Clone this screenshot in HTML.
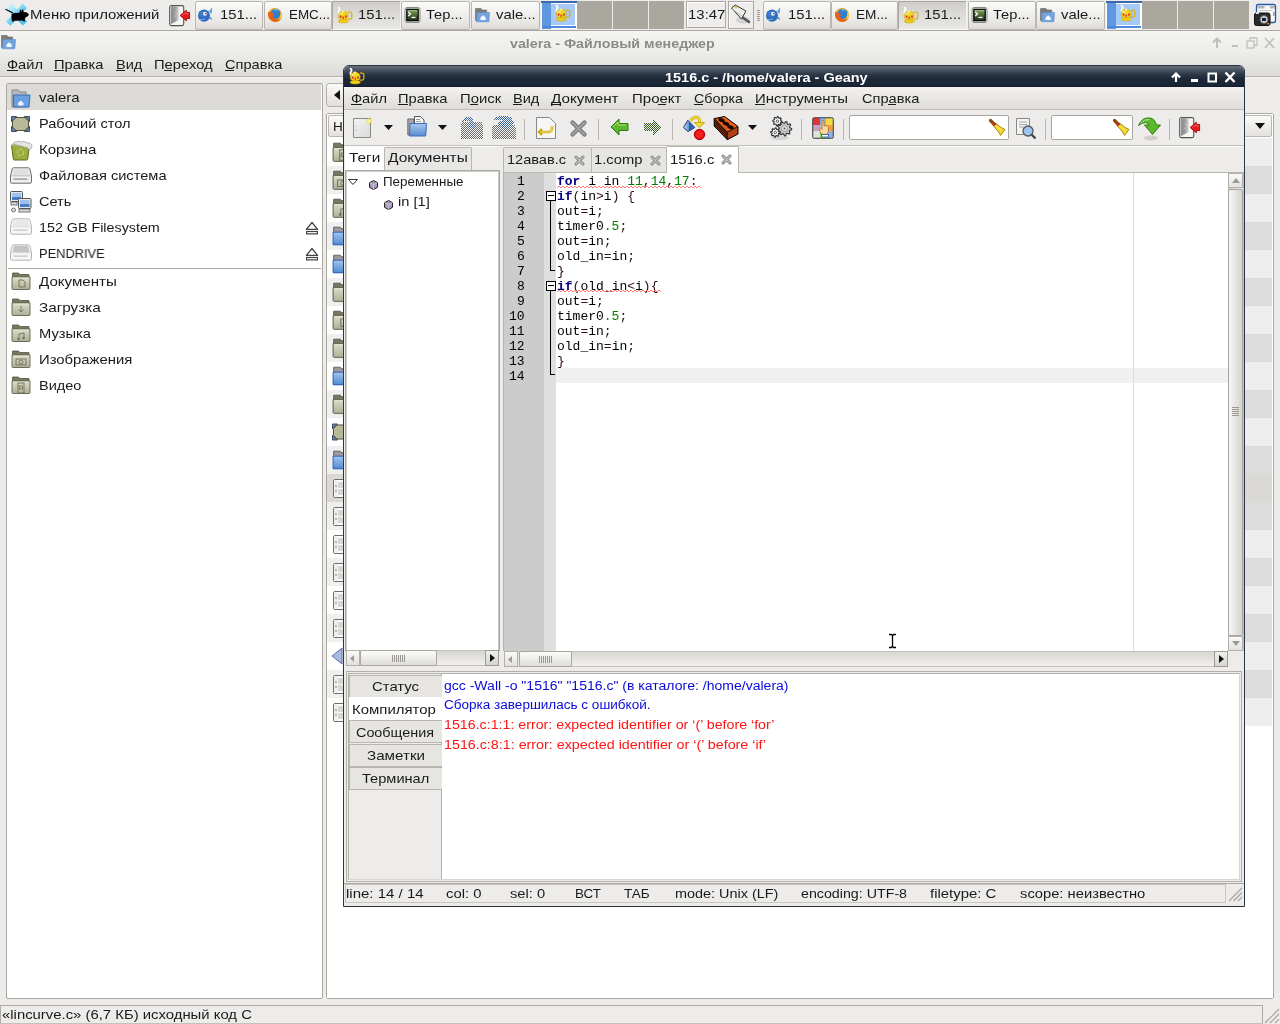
<!DOCTYPE html>
<html><head><meta charset="utf-8"><style>*{margin:0;padding:0;box-sizing:border-box}
html,body{width:1280px;height:1024px;overflow:hidden;background:#edeceb;font-family:"Liberation Sans",sans-serif;font-size:13px;color:#1a1a1a}
body{position:relative}
.a{position:absolute}
.t{position:absolute;white-space:nowrap;line-height:15px;transform-origin:0 0;will-change:transform}
.m{font-family:"Liberation Mono",monospace;font-size:13px}
svg{position:absolute;overflow:visible}
</style></head><body>
<svg width="0" height="0" style="position:absolute"><defs><linearGradient id="gd" x1="0" x2="1"><stop offset="0" stop-color="#c8c8c8"/><stop offset=".15" stop-color="#8e8e8e"/><stop offset=".55" stop-color="#9a9a9a"/><stop offset="1" stop-color="#d8d8d8"/></linearGradient><linearGradient id="gfold" x1="0" y1="0" x2="0" y2="1"><stop offset="0" stop-color="#dcddc8"/><stop offset="1" stop-color="#aeaf96"/></linearGradient><linearGradient id="gfoldb" x1="0" y1="0" x2="0" y2="1"><stop offset="0" stop-color="#a4c6f2"/><stop offset="1" stop-color="#5088d4"/></linearGradient><linearGradient id="gterm" x1="0" y1="0" x2="0" y2="1"><stop offset="0" stop-color="#b8d098"/><stop offset=".25" stop-color="#6a8a4a"/><stop offset="1" stop-color="#1e2a14"/></linearGradient><linearGradient id="gx" x1="0" y1="0" x2="1" y2="1"><stop offset="0" stop-color="#f0fbfe"/><stop offset=".35" stop-color="#9ee0f6"/><stop offset=".6" stop-color="#5ac8f0"/><stop offset="1" stop-color="#4cbcec"/></linearGradient></defs></svg>
<div class="a" style="left:0px;top:0px;width:1280px;height:30px;background:#edeceb"></div>
<div class="a" style="left:0px;top:30px;width:1280px;height:1px;background:#aaa8a1"></div>
<svg style="left:2px;top:1px" width="30" height="28" viewBox="0 0 30 28"><path d="M9.4 2.2 L3.3 7.9 L20.8 24.6 L25.2 20.4 Z" fill="url(#gx)"/><path d="M20.5 2.7 L24.9 7.1 L8.5 24.7 L4 20.4 Z" fill="url(#gx)"/>
<path d="M3.5 8.3 L11 12" stroke="#000" stroke-width="1.2"/>
<path d="M9.6 13 Q12 11.6 17.6 11.8 L17.8 9 Q18.4 7.8 19.1 9.2 L19.5 10.8 L20.2 8.4 Q21 7.6 21.4 9.4 L21.6 11 Q25.2 10.8 26.9 13.2 Q26.6 15.9 23.6 16.6 L22.7 18.8 L23.2 20.6 L21.1 20.2 L20.5 19.4 L12.3 19.8 L11.1 20.9 L9.8 20.1 Q9.1 16.2 9.6 13 Z" fill="#000"/></svg>
<div class="t" style="left:30px;top:7px;font-size:13px;transform:scaleX(1.1476);">Меню приложений</div>
<svg style="left:164px;top:1px" width="30" height="28" viewBox="0 0 30 28"><rect x="5.7" y="4.6" width="14" height="20" rx="1.6" fill="#f6f6f4" stroke="#55554f" stroke-width="1.1"/>
<path d="M6.3 5.2 H14.8 V19 L6.3 23.6 Z" fill="url(#gd)"/>
<path d="M11 11 l2.5 2.5 M12 14.5 l-1.6 1.6" stroke="#d4d4d4" stroke-width=".8"/>
<path d="M16.1 14.5 L22.3 9.2 V11.4 H25.6 V17.6 H22.3 V19.8 Z" fill="#e41c1c" stroke="#a80000" stroke-width=".9"/>
<path d="M18 14.5 L22 11.5 V13 H25" stroke="#f88" stroke-width=".6" fill="none"/></svg>
<div class="a" style="left:195px;top:1px;width:68px;height:29px;background:linear-gradient(#fbfbfb,#e6e5e2 80%,#dcdad6);border:1px solid #bab7b0;border-radius:2px"></div>
<svg style="left:198px;top:7px" width="16" height="16" viewBox="0 0 16 16"><path d="M10.5 4.5 l3.5-4 q.6 3-.5 6.5 z" fill="#6aa6e6"/><path d="M10.5 11 l3.8 2 q-1.5-2.5-1.6-3z" fill="#3f7cc8"/>
<ellipse cx="6" cy="8.6" rx="6" ry="6.2" fill="#2f6cc0"/><ellipse cx="5" cy="7" rx="3.5" ry="3" fill="#4a86d4" opacity=".6"/>
<circle cx="7" cy="6.8" r="2" fill="#f2f2f2"/><circle cx="7.6" cy="6.6" r=".8" fill="#445"/><path d="M1.5 12.5 q3 .5 5.5-.8" stroke="#7ab0ec" stroke-width="1" fill="none"/></svg>
<div class="t" style="left:220px;top:7px;font-size:13px;transform:scaleX(1.1427);">151...</div>
<div class="a" style="left:264px;top:1px;width:68px;height:29px;background:linear-gradient(#fbfbfb,#e6e5e2 80%,#dcdad6);border:1px solid #bab7b0;border-radius:2px"></div>
<svg style="left:267px;top:7px" width="16" height="16" viewBox="0 0 16 16"><circle cx="8" cy="8" r="7" fill="#f0a020"/><circle cx="8.6" cy="7" r="5" fill="#2f7fd0"/><path d="M6 2.5 q4-1.5 6.5 1.5 q-2-1-4 0z" fill="#50b8e8"/>
<path d="M1.2 4.5 q-1 7 4 9.5 q5 2.5 9.3-2 q-1.5 1-4.5.5 q-4-1-4.5-4 l2 .3 q-.5-1.5-2-2 l1.5-1.5 q-1.5 0-2.5 1z" fill="#e8601a"/>
<path d="M13.5 5 q2 3 .5 6.5 l-1.5-1 q1-2.5 1-5.5z" fill="#f8d030"/></svg>
<div class="t" style="left:289px;top:7px;font-size:13px;transform:scaleX(1.0295);">EMC...</div>
<div class="a" style="left:332px;top:1px;width:69px;height:29px;background:linear-gradient(#cfcecb,#e9e8e6);border:1px solid #a9a69f;border-right-color:#f4f4f2;border-bottom-color:#fafaf9"></div>
<svg style="left:336px;top:7px" width="16" height="16" viewBox="0 0 16 16"><path d="M2.6 .8 q1.8 1.4 .4 3 q-1.2 1.4 .2 3.6" stroke="#fff" stroke-width="1.8" fill="none" stroke-linecap="round"/>
<path d="M12 5.2 h2.2 q1.6 0 1.6 1.6 v3.6 q0 1.8-1.8 1.8 h-2.2" stroke="#d8b40c" stroke-width="1.3" fill="none"/>
<path d="M2.2 9.2 q0-4.8 5-5 q5 .2 5 5 q0 3.6-5 4 q-5-.4-5-4z" fill="#f0d418" stroke="#c8a20a" stroke-width=".6"/>
<ellipse cx="7" cy="4.6" rx="1.5" ry="1" fill="#faf0a0"/><ellipse cx="5" cy="7" rx="1.8" ry="1.3" fill="#faf0a0" opacity=".7"/>
<ellipse cx="7.3" cy="14.2" rx="5.2" ry="1.8" fill="#f0cc18" stroke="#c8a20a" stroke-width=".5"/>
<ellipse cx="4.6" cy="9.6" rx=".9" ry="1.4" fill="#e03828"/><ellipse cx="10" cy="9.6" rx=".9" ry="1.4" fill="#e03828"/><path d="M7.2 9 l1.1 1.8 l-1.1 1.8 l-1.1-1.8z" fill="#e84050"/></svg>
<div class="t" style="left:358px;top:7px;font-size:13px;transform:scaleX(1.1427);">151...</div>
<div class="a" style="left:401px;top:1px;width:69px;height:29px;background:linear-gradient(#fbfbfb,#e6e5e2 80%,#dcdad6);border:1px solid #bab7b0;border-radius:2px"></div>
<svg style="left:404px;top:7px" width="16" height="16" viewBox="0 0 16 16"><rect x="1" y=".5" width="15" height="15" rx="2" fill="#e8e8e6" stroke="#8a8a86" stroke-width="1"/>
<rect x="2.8" y="2.3" width="11.4" height="11.4" fill="url(#gterm)" stroke="#000" stroke-width="1.2"/>
<path d="M4.3 5 l2.2 2 l-2.2 2" stroke="#fff" fill="none" stroke-width="1.2"/><rect x="7.5" y="9.8" width="4" height="1.3" fill="#fff"/></svg>
<div class="t" style="left:426px;top:7px;font-size:13px;transform:scaleX(1.1250);">Тер...</div>
<div class="a" style="left:471px;top:1px;width:69px;height:29px;background:linear-gradient(#fbfbfb,#e6e5e2 80%,#dcdad6);border:1px solid #bab7b0;border-radius:2px"></div>
<svg style="left:474px;top:8px" width="16" height="14" viewBox="0 0 16 14"><path d="M1.5 .5 h5.5 l1.2 1.5 h4.5 v10.5 h-11.2z" fill="#7a7a78" stroke="#6a6a68" stroke-width=".6"/>
<path d="M3 4.5 h12.5 l-.6 8.8 q0 .5-.5.5 h-11.9z" fill="#74a4dc" stroke="#5a8cd0" stroke-width=".6"/>
<path d="M6.5 12 v-2.6 l2.6-2.2 l2.6 2.2 v2.6z" fill="#f4f8ff"/></svg>
<div class="t" style="left:496px;top:7px;font-size:13px;transform:scaleX(1.1428);">vale...</div>
<div class="a" style="left:541px;top:1px;width:36px;height:28px;background:#fff"></div>
<div class="a" style="left:541px;top:1px;width:36px;height:2px;background:#3a68b0"></div>
<div class="a" style="left:542px;top:3px;width:9px;height:26px;background:#6098e0"></div>
<div class="a" style="left:542px;top:26px;width:34px;height:2px;background:#4a88e0"></div>
<div class="a" style="left:551px;top:4px;width:24px;height:21px;background:#a6c9f8"></div>
<svg style="left:554px;top:5px" width="16" height="16" viewBox="0 0 16 16"><path d="M2.6 .8 q1.8 1.4 .4 3 q-1.2 1.4 .2 3.6" stroke="#fff" stroke-width="1.8" fill="none" stroke-linecap="round"/>
<path d="M12 5.2 h2.2 q1.6 0 1.6 1.6 v3.6 q0 1.8-1.8 1.8 h-2.2" stroke="#d8b40c" stroke-width="1.3" fill="none"/>
<path d="M2.2 9.2 q0-4.8 5-5 q5 .2 5 5 q0 3.6-5 4 q-5-.4-5-4z" fill="#f0d418" stroke="#c8a20a" stroke-width=".6"/>
<ellipse cx="7" cy="4.6" rx="1.5" ry="1" fill="#faf0a0"/><ellipse cx="5" cy="7" rx="1.8" ry="1.3" fill="#faf0a0" opacity=".7"/>
<ellipse cx="7.3" cy="14.2" rx="5.2" ry="1.8" fill="#f0cc18" stroke="#c8a20a" stroke-width=".5"/>
<ellipse cx="4.6" cy="9.6" rx=".9" ry="1.4" fill="#e03828"/><ellipse cx="10" cy="9.6" rx=".9" ry="1.4" fill="#e03828"/><path d="M7.2 9 l1.1 1.8 l-1.1 1.8 l-1.1-1.8z" fill="#e84050"/></svg>
<div class="a" style="left:577px;top:1px;width:35px;height:28px;background:#a9a79e"></div>
<div class="a" style="left:613px;top:1px;width:35px;height:28px;background:#a9a79e"></div>
<div class="a" style="left:649px;top:1px;width:35px;height:28px;background:#a9a79e"></div>
<div class="a" style="left:686px;top:1px;width:40px;height:27px;background:#eeedeb;border:1px solid #a9a79f;box-shadow:inset 1px 1px 0 #fff"></div>
<div class="t" style="left:688px;top:7px;font-size:13px;transform:scaleX(1.1503);">13:47</div>
<div class="a" style="left:728px;top:1px;width:26px;height:28px;background:#eeedeb;border:1px solid #a9a79f;box-shadow:inset 1px 1px 0 #fff"></div>
<svg style="left:728px;top:1px" width="26" height="28" viewBox="0 0 26 28"><ellipse cx="15" cy="19" rx="7" ry="3.5" fill="#000" opacity=".12"/>
<path d="M14 16 L21 21" stroke="#555" stroke-width="2.6" stroke-linecap="round"/>
<path d="M3.5 7 L7.2 4 L17.9 10 L13.5 18 Z" fill="#f0f0f0" stroke="#333" stroke-width="1"/>
<path d="M4 8 L14 15" stroke="#bbb" stroke-width="1"/>
<path d="M6.5 5.5 L9 7" stroke="#f0c040" stroke-width="2"/></svg>
<div class="a" style="left:757px;top:10px;width:3px;height:1px;background:#9c9a94"></div>
<div class="a" style="left:757px;top:12px;width:3px;height:1px;background:#9c9a94"></div>
<div class="a" style="left:757px;top:14px;width:3px;height:1px;background:#9c9a94"></div>
<div class="a" style="left:757px;top:16px;width:3px;height:1px;background:#9c9a94"></div>
<div class="a" style="left:757px;top:18px;width:3px;height:1px;background:#9c9a94"></div>
<div class="a" style="left:757px;top:20px;width:3px;height:1px;background:#9c9a94"></div>
<div class="a" style="left:763px;top:1px;width:68px;height:29px;background:linear-gradient(#fbfbfb,#e6e5e2 80%,#dcdad6);border:1px solid #bab7b0;border-radius:2px"></div>
<svg style="left:766px;top:7px" width="16" height="16" viewBox="0 0 16 16"><path d="M10.5 4.5 l3.5-4 q.6 3-.5 6.5 z" fill="#6aa6e6"/><path d="M10.5 11 l3.8 2 q-1.5-2.5-1.6-3z" fill="#3f7cc8"/>
<ellipse cx="6" cy="8.6" rx="6" ry="6.2" fill="#2f6cc0"/><ellipse cx="5" cy="7" rx="3.5" ry="3" fill="#4a86d4" opacity=".6"/>
<circle cx="7" cy="6.8" r="2" fill="#f2f2f2"/><circle cx="7.6" cy="6.6" r=".8" fill="#445"/><path d="M1.5 12.5 q3 .5 5.5-.8" stroke="#7ab0ec" stroke-width="1" fill="none"/></svg>
<div class="t" style="left:788px;top:7px;font-size:13px;transform:scaleX(1.1427);">151...</div>
<div class="a" style="left:831px;top:1px;width:67px;height:29px;background:linear-gradient(#fbfbfb,#e6e5e2 80%,#dcdad6);border:1px solid #bab7b0;border-radius:2px"></div>
<svg style="left:834px;top:7px" width="16" height="16" viewBox="0 0 16 16"><circle cx="8" cy="8" r="7" fill="#f0a020"/><circle cx="8.6" cy="7" r="5" fill="#2f7fd0"/><path d="M6 2.5 q4-1.5 6.5 1.5 q-2-1-4 0z" fill="#50b8e8"/>
<path d="M1.2 4.5 q-1 7 4 9.5 q5 2.5 9.3-2 q-1.5 1-4.5.5 q-4-1-4.5-4 l2 .3 q-.5-1.5-2-2 l1.5-1.5 q-1.5 0-2.5 1z" fill="#e8601a"/>
<path d="M13.5 5 q2 3 .5 6.5 l-1.5-1 q1-2.5 1-5.5z" fill="#f8d030"/></svg>
<div class="t" style="left:856px;top:7px;font-size:13px;transform:scaleX(1.0489);">EM...</div>
<div class="a" style="left:898px;top:1px;width:69px;height:29px;background:linear-gradient(#cfcecb,#e9e8e6);border:1px solid #a9a69f;border-right-color:#f4f4f2;border-bottom-color:#fafaf9"></div>
<svg style="left:902px;top:7px" width="16" height="16" viewBox="0 0 16 16"><path d="M2.6 .8 q1.8 1.4 .4 3 q-1.2 1.4 .2 3.6" stroke="#fff" stroke-width="1.8" fill="none" stroke-linecap="round"/>
<path d="M12 5.2 h2.2 q1.6 0 1.6 1.6 v3.6 q0 1.8-1.8 1.8 h-2.2" stroke="#d8b40c" stroke-width="1.3" fill="none"/>
<path d="M2.2 9.2 q0-4.8 5-5 q5 .2 5 5 q0 3.6-5 4 q-5-.4-5-4z" fill="#f0d418" stroke="#c8a20a" stroke-width=".6"/>
<ellipse cx="7" cy="4.6" rx="1.5" ry="1" fill="#faf0a0"/><ellipse cx="5" cy="7" rx="1.8" ry="1.3" fill="#faf0a0" opacity=".7"/>
<ellipse cx="7.3" cy="14.2" rx="5.2" ry="1.8" fill="#f0cc18" stroke="#c8a20a" stroke-width=".5"/>
<ellipse cx="4.6" cy="9.6" rx=".9" ry="1.4" fill="#e03828"/><ellipse cx="10" cy="9.6" rx=".9" ry="1.4" fill="#e03828"/><path d="M7.2 9 l1.1 1.8 l-1.1 1.8 l-1.1-1.8z" fill="#e84050"/></svg>
<div class="t" style="left:924px;top:7px;font-size:13px;transform:scaleX(1.1427);">151...</div>
<div class="a" style="left:968px;top:1px;width:68px;height:29px;background:linear-gradient(#fbfbfb,#e6e5e2 80%,#dcdad6);border:1px solid #bab7b0;border-radius:2px"></div>
<svg style="left:971px;top:7px" width="16" height="16" viewBox="0 0 16 16"><rect x="1" y=".5" width="15" height="15" rx="2" fill="#e8e8e6" stroke="#8a8a86" stroke-width="1"/>
<rect x="2.8" y="2.3" width="11.4" height="11.4" fill="url(#gterm)" stroke="#000" stroke-width="1.2"/>
<path d="M4.3 5 l2.2 2 l-2.2 2" stroke="#fff" fill="none" stroke-width="1.2"/><rect x="7.5" y="9.8" width="4" height="1.3" fill="#fff"/></svg>
<div class="t" style="left:993px;top:7px;font-size:13px;transform:scaleX(1.1250);">Тер...</div>
<div class="a" style="left:1036px;top:1px;width:69px;height:29px;background:linear-gradient(#fbfbfb,#e6e5e2 80%,#dcdad6);border:1px solid #bab7b0;border-radius:2px"></div>
<svg style="left:1039px;top:8px" width="16" height="14" viewBox="0 0 16 14"><path d="M1.5 .5 h5.5 l1.2 1.5 h4.5 v10.5 h-11.2z" fill="#7a7a78" stroke="#6a6a68" stroke-width=".6"/>
<path d="M3 4.5 h12.5 l-.6 8.8 q0 .5-.5.5 h-11.9z" fill="#74a4dc" stroke="#5a8cd0" stroke-width=".6"/>
<path d="M6.5 12 v-2.6 l2.6-2.2 l2.6 2.2 v2.6z" fill="#f4f8ff"/></svg>
<div class="t" style="left:1061px;top:7px;font-size:13px;transform:scaleX(1.1428);">vale...</div>
<div class="a" style="left:1106px;top:1px;width:36px;height:28px;background:#fff"></div>
<div class="a" style="left:1106px;top:1px;width:36px;height:2px;background:#3a68b0"></div>
<div class="a" style="left:1107px;top:3px;width:9px;height:26px;background:#6098e0"></div>
<div class="a" style="left:1107px;top:26px;width:34px;height:2px;background:#4a88e0"></div>
<div class="a" style="left:1116px;top:4px;width:24px;height:21px;background:#a6c9f8"></div>
<svg style="left:1119px;top:5px" width="16" height="16" viewBox="0 0 16 16"><path d="M2.6 .8 q1.8 1.4 .4 3 q-1.2 1.4 .2 3.6" stroke="#fff" stroke-width="1.8" fill="none" stroke-linecap="round"/>
<path d="M12 5.2 h2.2 q1.6 0 1.6 1.6 v3.6 q0 1.8-1.8 1.8 h-2.2" stroke="#d8b40c" stroke-width="1.3" fill="none"/>
<path d="M2.2 9.2 q0-4.8 5-5 q5 .2 5 5 q0 3.6-5 4 q-5-.4-5-4z" fill="#f0d418" stroke="#c8a20a" stroke-width=".6"/>
<ellipse cx="7" cy="4.6" rx="1.5" ry="1" fill="#faf0a0"/><ellipse cx="5" cy="7" rx="1.8" ry="1.3" fill="#faf0a0" opacity=".7"/>
<ellipse cx="7.3" cy="14.2" rx="5.2" ry="1.8" fill="#f0cc18" stroke="#c8a20a" stroke-width=".5"/>
<ellipse cx="4.6" cy="9.6" rx=".9" ry="1.4" fill="#e03828"/><ellipse cx="10" cy="9.6" rx=".9" ry="1.4" fill="#e03828"/><path d="M7.2 9 l1.1 1.8 l-1.1 1.8 l-1.1-1.8z" fill="#e84050"/></svg>
<div class="a" style="left:1142px;top:1px;width:35px;height:28px;background:#a9a79e"></div>
<div class="a" style="left:1178px;top:1px;width:35px;height:28px;background:#a9a79e"></div>
<div class="a" style="left:1214px;top:1px;width:35px;height:28px;background:#a9a79e"></div>
<svg style="left:1250px;top:0px" width="30" height="30" viewBox="0 0 30 30"><rect x="6.5" y="4.5" width="19" height="18" rx="2" fill="#fafafa" stroke="#2a58a8" stroke-width="1.3"/><rect x="7.5" y="6" width="7" height="2.5" fill="#b4b4b4"/><rect x="20" y="6" width="5" height="2.5" fill="#b4b4b4"/><rect x="8.5" y="10" width="14" height="1" fill="#ccc"/><rect x="23" y="12" width="1.4" height="4" fill="#6a9ee0"/>
<rect x="4.5" y="13" width="15.5" height="12.5" rx="2" fill="#2a2a2a" stroke="#111" stroke-width="1"/><rect x="6" y="12" width="3" height="2" fill="#ddd"/><circle cx="14" cy="19.5" r="4" fill="#cfcfcf" stroke="#555" stroke-width=".8"/><rect x="12" y="18" width="4" height="3" fill="#10204a"/><rect x="17.5" y="23" width="1.5" height="1.5" fill="#f0a020"/></svg>
<div class="a" style="left:0px;top:31px;width:1280px;height:45px;background:linear-gradient(#f4f4f3,#ededeb 45%,#dcdbd6)"></div>
<div class="a" style="left:0px;top:76px;width:1280px;height:1px;background:#b3b1aa"></div>
<div class="a" style="left:0px;top:77px;width:1280px;height:1px;background:#f4f4f3"></div>
<svg style="left:0px;top:35px" width="16" height="14" viewBox="0 0 16 14"><path d="M1.5 .5 h5.5 l1.2 1.5 h4.5 v10.5 h-11.2z" fill="#7a7a78" stroke="#6a6a68" stroke-width=".6"/>
<path d="M3 4.5 h12.5 l-.6 8.8 q0 .5-.5.5 h-11.9z" fill="#74a4dc" stroke="#5a8cd0" stroke-width=".6"/>
<path d="M6.5 12 v-2.6 l2.6-2.2 l2.6 2.2 v2.6z" fill="#f4f8ff"/></svg>
<div class="t" style="left:510px;top:37px;font-size:12px;font-weight:bold;color:#8c8b87;transform:scaleX(1.1889);">valera - Файловый менеджер</div>
<svg style="left:1210px;top:36px" width="66" height="14" viewBox="0 0 66 14"><path d="M7 12 v-9 M3 6.5 l4-4 l4 4" stroke="#c2c0ba" stroke-width="2" fill="none"/>
<rect x="22" y="9" width="6" height="2" fill="#c2c0ba"/>
<rect x="37" y="5" width="7" height="7" fill="none" stroke="#c2c0ba" stroke-width="1.3"/><path d="M40 5 v-3 h7 v7 h-3" fill="none" stroke="#c2c0ba" stroke-width="1.3"/>
<path d="M55 2 l9 10 M64 2 l-9 10" stroke="#c2c0ba" stroke-width="1.8"/></svg>
<div class="t" style="left:7px;top:57px;font-size:13px;transform:scaleX(1.1237);">Файл</div>
<div class="a" style="left:7px;top:70px;width:11px;height:1px;background:#1a1a1a"></div>
<div class="t" style="left:54px;top:57px;font-size:13px;transform:scaleX(1.1266);">Правка</div>
<div class="a" style="left:54px;top:70px;width:10px;height:1px;background:#1a1a1a"></div>
<div class="t" style="left:116px;top:57px;font-size:13px;transform:scaleX(1.1209);">Вид</div>
<div class="a" style="left:116px;top:70px;width:9px;height:1px;background:#1a1a1a"></div>
<div class="t" style="left:154px;top:57px;font-size:13px;transform:scaleX(1.1355);">Переход</div>
<div class="a" style="left:164px;top:70px;width:8px;height:1px;background:#1a1a1a"></div>
<div class="t" style="left:225px;top:57px;font-size:13px;transform:scaleX(1.1228);">Справка</div>
<div class="a" style="left:225px;top:70px;width:9px;height:1px;background:#1a1a1a"></div>
<div class="a" style="left:6px;top:83px;width:317px;height:916px;background:#fff;border:1px solid #a9a7a0;border-radius:2px"></div>
<div class="a" style="left:7px;top:84px;width:314px;height:26px;background:#dcdad6"></div>
<div class="t" style="left:39px;top:90px;font-size:13px;transform:scaleX(1.1456);">valera</div>
<svg style="left:11px;top:89px" width="20" height="19" viewBox="0 0 20 19"><path d="M1 1 h6 l2 2 h6 v15 h-14z" fill="#b8b8b8" stroke="#777" stroke-width=".8"/><path d="M2.5 6 h16.5 l-1 12 h-15.5z" fill="#6a9fe0" stroke="#3a6cb8" stroke-width="1"/><path d="M7 14 v2.5 h5.5 v-2.5 l-2.75-2.5z" fill="#eef4ff"/></svg>
<div class="t" style="left:39px;top:116px;font-size:13px;transform:scaleX(1.1208);">Рабочий стол</div>
<svg style="left:11px;top:116px" width="19" height="16" viewBox="0 0 19 16"><path d="M.5 .5 h5 l-5 5z M18.5 .5 v5 l-5-5z M.5 15.5 v-5 l5 5z M18.5 15.5 h-5 l5-5z" fill="#6a80a8" stroke="#3a4a68" stroke-width="1"/><path d="M5 1.5 h9 l3.5 3.5 v6 l-3.5 3.5 h-9 l-3.5-3.5 v-6z" fill="#b8b99a" stroke="#4f5038" stroke-width="1"/></svg>
<div class="t" style="left:39px;top:142px;font-size:13px;transform:scaleX(1.1562);">Корзина</div>
<svg style="left:10px;top:139px" width="23" height="22" viewBox="0 0 23 22"><path d="M1.5 6 h18 l-1.8 14 q-.2 1-1.2 1 h-12 q-1 0-1.2-1z" fill="#9aae3e" stroke="#5d6a1f" stroke-width="1"/><path d="M1 6 h19" stroke="#c8d890" stroke-width="1.2"/><path d="M3 5 q1-3 4-2 q2-2 4 0 q3-2 6 1 q4-1 5 3 q0 3-3 4 l-1-2z" fill="#e4e4e0" stroke="#9a9a96" stroke-width=".7"/><circle cx="10.5" cy="13.5" r="3.2" fill="none" stroke="#d0dca0" stroke-width="1" stroke-dasharray="3 1.5"/></svg>
<div class="t" style="left:39px;top:168px;font-size:13px;transform:scaleX(1.1239);">Файловая система</div>
<svg style="left:10px;top:167px" width="22" height="17" viewBox="0 0 22 17"><path d="M3.5 .8 h15 q1 0 1.3 1 l1.7 7 v6 q0 1.4-1.4 1.4 h-18.2 q-1.4 0-1.4-1.4 v-6 l1.7-7 q.3-1 1.3-1z" fill="#f0f0f0" stroke="#6a6a6a" stroke-width="1"/>
<path d="M4 1.8 h14 l1.5 6.5 h-17z" fill="#e0e0e0"/>
<path d="M1.2 8.8 h19.6" stroke="#6a6a6a" stroke-width=".6" opacity=".6"/><rect x="3.5" y="11.5" width="14" height="1.2" fill="#8a8a8a"/></svg>
<div class="t" style="left:39px;top:194px;font-size:13px;transform:scaleX(1.1178);">Сеть</div>
<svg style="left:10px;top:191px" width="22" height="22" viewBox="0 0 22 22"><rect x=".5" y=".5" width="12" height="10" rx="1" fill="#e8e8e8" stroke="#555" stroke-width="1"/><rect x="2" y="2" width="9" height="7" fill="#9cc0f0"/><rect x="2" y="6" width="9" height="3" fill="#4a7cc8"/><rect x="1" y="11" width="6" height="3" fill="#ddd" stroke="#555" stroke-width=".8"/><circle cx="3.5" cy="19" r="2" fill="#ddd" stroke="#555" stroke-width=".8"/>
<rect x="8.5" y="7.5" width="12.5" height="10" rx="1" fill="#e8e8e8" stroke="#555" stroke-width="1"/><rect x="10" y="9" width="9.5" height="7" fill="#9cc0f0"/><rect x="10" y="13" width="9.5" height="3" fill="#4a7cc8"/><rect x="9" y="18" width="11" height="3" fill="#ddd" stroke="#555" stroke-width=".8"/></svg>
<div class="t" style="left:39px;top:220px;font-size:13px;transform:scaleX(1.0996);">152 GB Filesystem</div>
<svg style="left:10px;top:218px" width="22" height="17" viewBox="0 0 22 17"><path d="M3.5 .8 h15 q1 0 1.3 1 l1.7 7 v6 q0 1.4-1.4 1.4 h-18.2 q-1.4 0-1.4-1.4 v-6 l1.7-7 q.3-1 1.3-1z" fill="#f6f6f6" stroke="#b4b4b4" stroke-width="1"/>
<path d="M4 1.8 h14 l1.5 6.5 h-17z" fill="#e8e8e8"/>
<path d="M1.2 8.8 h19.6" stroke="#b4b4b4" stroke-width=".6" opacity=".6"/><rect x="3.5" y="11.5" width="14" height="1.2" fill="#c4c4c4"/></svg>
<div class="t" style="left:39px;top:246px;font-size:13px;transform:scaleX(0.9894);">PENDRIVE</div>
<svg style="left:10px;top:244px" width="22" height="17" viewBox="0 0 22 17"><path d="M3.5 .8 h15 q1 0 1.3 1 l1.7 7 v6 q0 1.4-1.4 1.4 h-18.2 q-1.4 0-1.4-1.4 v-6 l1.7-7 q.3-1 1.3-1z" fill="#f6f6f6" stroke="#b4b4b4" stroke-width="1"/>
<path d="M4 1.8 h14 l1.5 6.5 h-17z" fill="#c4c4c4"/>
<path d="M1.2 8.8 h19.6" stroke="#b4b4b4" stroke-width=".6" opacity=".6"/><rect x="3.5" y="11.5" width="14" height="1.2" fill="#c4c4c4"/></svg>
<svg style="left:305px;top:221px" width="14" height="14" viewBox="0 0 14 14"><path d="M7 1.5 L12.6 8.4 H1.4 Z" fill="#fcfcfc" stroke="#444" stroke-width="1.3" stroke-linejoin="round"/><rect x="1.6" y="10.5" width="10.8" height="2.4" fill="#fff" stroke="#444" stroke-width="1.2"/></svg>
<svg style="left:305px;top:247px" width="14" height="14" viewBox="0 0 14 14"><path d="M7 1.5 L12.6 8.4 H1.4 Z" fill="#fcfcfc" stroke="#444" stroke-width="1.3" stroke-linejoin="round"/><rect x="1.6" y="10.5" width="10.8" height="2.4" fill="#fff" stroke="#444" stroke-width="1.2"/></svg>
<div class="a" style="left:8px;top:268px;width:313px;height:1px;background:#aaa89f"></div>
<div class="t" style="left:39px;top:274px;font-size:13px;transform:scaleX(1.1614);">Документы</div>
<svg style="left:11px;top:272px" width="20" height="18" viewBox="0 0 20 18"><path d="M1.5 1 h6 l1.5 1.5 h9 v14 h-16.5z" fill="#77785f" stroke="#55564a" stroke-width=".8"/>
<path d="M1 5 h18 v11.5 q0 1-1 1 h-16 q-1 0-1-1z" fill="url(#gfold)" stroke="#5f604e" stroke-width=".9"/>
<path d="M2 6 h16" stroke="#eceddc" stroke-width=".8"/><path d="M8 8 h4 l2 2 v5 h-6z" fill="none" stroke="#6f705a" stroke-width=".9"/></svg>
<div class="t" style="left:39px;top:300px;font-size:13px;transform:scaleX(1.1753);">Загрузка</div>
<svg style="left:11px;top:298px" width="20" height="18" viewBox="0 0 20 18"><path d="M1.5 1 h6 l1.5 1.5 h9 v14 h-16.5z" fill="#77785f" stroke="#55564a" stroke-width=".8"/>
<path d="M1 5 h18 v11.5 q0 1-1 1 h-16 q-1 0-1-1z" fill="url(#gfold)" stroke="#5f604e" stroke-width=".9"/>
<path d="M2 6 h16" stroke="#eceddc" stroke-width=".8"/><path d="M10 8 v6 M7.5 11.5 l2.5 2.5 l2.5-2.5" stroke="#6f705a" fill="none" stroke-width=".9"/></svg>
<div class="t" style="left:39px;top:326px;font-size:13px;transform:scaleX(1.1292);">Музыка</div>
<svg style="left:11px;top:324px" width="20" height="18" viewBox="0 0 20 18"><path d="M1.5 1 h6 l1.5 1.5 h9 v14 h-16.5z" fill="#77785f" stroke="#55564a" stroke-width=".8"/>
<path d="M1 5 h18 v11.5 q0 1-1 1 h-16 q-1 0-1-1z" fill="url(#gfold)" stroke="#5f604e" stroke-width=".9"/>
<path d="M2 6 h16" stroke="#eceddc" stroke-width=".8"/><path d="M8 15 v-5 l5-1 v5" stroke="#6f705a" fill="none" stroke-width=".9"/><circle cx="7.5" cy="15" r="1.2" fill="#6f705a"/><circle cx="12.5" cy="14" r="1.2" fill="#6f705a"/></svg>
<div class="t" style="left:39px;top:352px;font-size:13px;transform:scaleX(1.1417);">Изображения</div>
<svg style="left:11px;top:350px" width="20" height="18" viewBox="0 0 20 18"><path d="M1.5 1 h6 l1.5 1.5 h9 v14 h-16.5z" fill="#77785f" stroke="#55564a" stroke-width=".8"/>
<path d="M1 5 h18 v11.5 q0 1-1 1 h-16 q-1 0-1-1z" fill="url(#gfold)" stroke="#5f604e" stroke-width=".9"/>
<path d="M2 6 h16" stroke="#eceddc" stroke-width=".8"/><rect x="5" y="9" width="10" height="6" fill="none" stroke="#6f705a" stroke-width=".9"/><circle cx="10" cy="12" r="2" fill="none" stroke="#6f705a" stroke-width=".9"/></svg>
<div class="t" style="left:39px;top:378px;font-size:13px;transform:scaleX(1.1139);">Видео</div>
<svg style="left:11px;top:376px" width="20" height="18" viewBox="0 0 20 18"><path d="M1.5 1 h6 l1.5 1.5 h9 v14 h-16.5z" fill="#77785f" stroke="#55564a" stroke-width=".8"/>
<path d="M1 5 h18 v11.5 q0 1-1 1 h-16 q-1 0-1-1z" fill="url(#gfold)" stroke="#5f604e" stroke-width=".9"/>
<path d="M2 6 h16" stroke="#eceddc" stroke-width=".8"/><rect x="7" y="7" width="6" height="10" fill="none" stroke="#6f705a" stroke-width=".9"/><rect x="8.5" y="10" width="3" height="3" fill="none" stroke="#6f705a" stroke-width=".8"/></svg>
<div class="a" style="left:326px;top:83px;width:30px;height:24px;background:linear-gradient(#fafaf9,#e2e0dc);border:1px solid #b3b0a9;border-radius:3px"></div>
<svg style="left:334px;top:90px" width="6" height="10" viewBox="0 0 6 10"><path d="M6 0 v10 l-6-5z" fill="#111"/></svg>
<div class="a" style="left:326px;top:113px;width:948px;height:886px;background:#fff;border:1px solid #a9a7a0;border-radius:2px"></div>
<div class="a" style="left:327px;top:114px;width:946px;height:24px;background:#fff"></div>
<div class="a" style="left:328px;top:115px;width:100px;height:22px;background:linear-gradient(#fafaf9,#e4e2de);border:1px solid #b9b6af;border-radius:2px"></div>
<div class="t" style="left:333px;top:119px;font-size:13px;transform:scaleX(1.0416);">Н</div>
<div class="a" style="left:1240px;top:115px;width:32px;height:22px;background:linear-gradient(#fafaf9,#e4e2de);border:1px solid #b9b6af;border-radius:2px"></div>
<svg style="left:1255px;top:123px" width="10" height="6" viewBox="0 0 10 6"><path d="M0 0 h10 l-5 6z" fill="#111"/></svg>
<div class="a" style="left:327px;top:138px;width:17px;height:28px;background:#ffffff"></div>
<div class="a" style="left:1245px;top:138px;width:27px;height:28px;background:#eeeeee"></div>
<svg style="left:332px;top:142px" width="22" height="20" viewBox="0 0 20 18"><path d="M1.5 1 h6 l1.5 1.5 h9 v14 h-16.5z" fill="#77785f" stroke="#55564a" stroke-width=".8"/>
<path d="M1 5 h18 v11.5 q0 1-1 1 h-16 q-1 0-1-1z" fill="url(#gfold)" stroke="#5f604e" stroke-width=".9"/>
<path d="M2 6 h16" stroke="#eceddc" stroke-width=".8"/><rect x="7" y="7" width="6" height="10" fill="none" stroke="#6f705a" stroke-width=".9"/><rect x="8.5" y="10" width="3" height="3" fill="none" stroke="#6f705a" stroke-width=".8"/></svg>
<div class="a" style="left:327px;top:166px;width:17px;height:28px;background:#efefef"></div>
<div class="a" style="left:1245px;top:166px;width:27px;height:28px;background:#dcdcdc"></div>
<svg style="left:332px;top:170px" width="22" height="20" viewBox="0 0 20 18"><path d="M1.5 1 h6 l1.5 1.5 h9 v14 h-16.5z" fill="#77785f" stroke="#55564a" stroke-width=".8"/>
<path d="M1 5 h18 v11.5 q0 1-1 1 h-16 q-1 0-1-1z" fill="url(#gfold)" stroke="#5f604e" stroke-width=".9"/>
<path d="M2 6 h16" stroke="#eceddc" stroke-width=".8"/><rect x="5" y="9" width="10" height="6" fill="none" stroke="#6f705a" stroke-width=".9"/><circle cx="10" cy="12" r="2" fill="none" stroke="#6f705a" stroke-width=".9"/></svg>
<div class="a" style="left:327px;top:194px;width:17px;height:28px;background:#ffffff"></div>
<div class="a" style="left:1245px;top:194px;width:27px;height:28px;background:#eeeeee"></div>
<svg style="left:332px;top:198px" width="22" height="20" viewBox="0 0 20 18"><path d="M1.5 1 h6 l1.5 1.5 h9 v14 h-16.5z" fill="#77785f" stroke="#55564a" stroke-width=".8"/>
<path d="M1 5 h18 v11.5 q0 1-1 1 h-16 q-1 0-1-1z" fill="url(#gfold)" stroke="#5f604e" stroke-width=".9"/>
<path d="M2 6 h16" stroke="#eceddc" stroke-width=".8"/><path d="M8 15 v-5 l5-1 v5" stroke="#6f705a" fill="none" stroke-width=".9"/><circle cx="7.5" cy="15" r="1.2" fill="#6f705a"/><circle cx="12.5" cy="14" r="1.2" fill="#6f705a"/></svg>
<div class="a" style="left:327px;top:222px;width:17px;height:28px;background:#efefef"></div>
<div class="a" style="left:1245px;top:222px;width:27px;height:28px;background:#dcdcdc"></div>
<svg style="left:332px;top:226px" width="22" height="20" viewBox="0 0 20 18"><path d="M1.5 1 h6 l1.5 1.5 h9 v14 h-16.5z" fill="#9a9a9a" stroke="#5a5a5a" stroke-width=".8"/>
<path d="M1 5.5 h18.5 l-.8 11.5 h-17.7z" fill="url(#gfoldb)" stroke="#2f62b0" stroke-width=".9"/></svg>
<div class="a" style="left:327px;top:250px;width:17px;height:28px;background:#ffffff"></div>
<div class="a" style="left:1245px;top:250px;width:27px;height:28px;background:#eeeeee"></div>
<svg style="left:332px;top:254px" width="22" height="20" viewBox="0 0 20 18"><path d="M1.5 1 h6 l1.5 1.5 h9 v14 h-16.5z" fill="#9a9a9a" stroke="#5a5a5a" stroke-width=".8"/>
<path d="M1 5.5 h18.5 l-.8 11.5 h-17.7z" fill="url(#gfoldb)" stroke="#2f62b0" stroke-width=".9"/></svg>
<div class="a" style="left:327px;top:278px;width:17px;height:28px;background:#efefef"></div>
<div class="a" style="left:1245px;top:278px;width:27px;height:28px;background:#dcdcdc"></div>
<svg style="left:332px;top:282px" width="22" height="20" viewBox="0 0 20 18"><path d="M1.5 1 h6 l1.5 1.5 h9 v14 h-16.5z" fill="#77785f" stroke="#55564a" stroke-width=".8"/>
<path d="M1 5 h18 v11.5 q0 1-1 1 h-16 q-1 0-1-1z" fill="url(#gfold)" stroke="#5f604e" stroke-width=".9"/>
<path d="M2 6 h16" stroke="#eceddc" stroke-width=".8"/></svg>
<div class="a" style="left:327px;top:306px;width:17px;height:28px;background:#ffffff"></div>
<div class="a" style="left:1245px;top:306px;width:27px;height:28px;background:#eeeeee"></div>
<svg style="left:332px;top:310px" width="22" height="20" viewBox="0 0 20 18"><path d="M1.5 1 h6 l1.5 1.5 h9 v14 h-16.5z" fill="#77785f" stroke="#55564a" stroke-width=".8"/>
<path d="M1 5 h18 v11.5 q0 1-1 1 h-16 q-1 0-1-1z" fill="url(#gfold)" stroke="#5f604e" stroke-width=".9"/>
<path d="M2 6 h16" stroke="#eceddc" stroke-width=".8"/><path d="M8 8 h4 l2 2 v5 h-6z" fill="none" stroke="#6f705a" stroke-width=".9"/></svg>
<div class="a" style="left:327px;top:334px;width:17px;height:28px;background:#efefef"></div>
<div class="a" style="left:1245px;top:334px;width:27px;height:28px;background:#dcdcdc"></div>
<svg style="left:332px;top:338px" width="22" height="20" viewBox="0 0 20 18"><path d="M1.5 1 h6 l1.5 1.5 h9 v14 h-16.5z" fill="#77785f" stroke="#55564a" stroke-width=".8"/>
<path d="M1 5 h18 v11.5 q0 1-1 1 h-16 q-1 0-1-1z" fill="url(#gfold)" stroke="#5f604e" stroke-width=".9"/>
<path d="M2 6 h16" stroke="#eceddc" stroke-width=".8"/></svg>
<div class="a" style="left:327px;top:362px;width:17px;height:28px;background:#ffffff"></div>
<div class="a" style="left:1245px;top:362px;width:27px;height:28px;background:#eeeeee"></div>
<svg style="left:332px;top:366px" width="22" height="20" viewBox="0 0 20 18"><path d="M1.5 1 h6 l1.5 1.5 h9 v14 h-16.5z" fill="#9a9a9a" stroke="#5a5a5a" stroke-width=".8"/>
<path d="M1 5.5 h18.5 l-.8 11.5 h-17.7z" fill="url(#gfoldb)" stroke="#2f62b0" stroke-width=".9"/></svg>
<div class="a" style="left:327px;top:390px;width:17px;height:28px;background:#efefef"></div>
<div class="a" style="left:1245px;top:390px;width:27px;height:28px;background:#dcdcdc"></div>
<svg style="left:332px;top:394px" width="22" height="20" viewBox="0 0 20 18"><path d="M1.5 1 h6 l1.5 1.5 h9 v14 h-16.5z" fill="#77785f" stroke="#55564a" stroke-width=".8"/>
<path d="M1 5 h18 v11.5 q0 1-1 1 h-16 q-1 0-1-1z" fill="url(#gfold)" stroke="#5f604e" stroke-width=".9"/>
<path d="M2 6 h16" stroke="#eceddc" stroke-width=".8"/></svg>
<div class="a" style="left:327px;top:418px;width:17px;height:28px;background:#ffffff"></div>
<div class="a" style="left:1245px;top:418px;width:27px;height:28px;background:#eeeeee"></div>
<svg style="left:332px;top:423px" width="21" height="18" viewBox="0 0 21 17"><path d="M.5 .5 h5 l-5 5z M.5 16.5 v-5 l5 5z" fill="#6a80a8" stroke="#3a4a68" stroke-width="1"/><path d="M5 1.5 h11 l3.5 3.5 v7 l-3.5 3.5 h-11 l-3.5-3.5 v-7z" fill="#b8b99a" stroke="#4f5038" stroke-width="1"/></svg>
<div class="a" style="left:327px;top:446px;width:17px;height:28px;background:#efefef"></div>
<div class="a" style="left:1245px;top:446px;width:27px;height:28px;background:#dcdcdc"></div>
<svg style="left:332px;top:450px" width="22" height="20" viewBox="0 0 20 18"><path d="M1.5 1 h6 l1.5 1.5 h9 v14 h-16.5z" fill="#9a9a9a" stroke="#5a5a5a" stroke-width=".8"/>
<path d="M1 5.5 h18.5 l-.8 11.5 h-17.7z" fill="url(#gfoldb)" stroke="#2f62b0" stroke-width=".9"/></svg>
<div class="a" style="left:327px;top:474px;width:17px;height:28px;background:#dbd9d5"></div>
<div class="a" style="left:1245px;top:474px;width:27px;height:28px;background:#dbd9d5"></div>
<svg style="left:333px;top:479px" width="16" height="19" viewBox="0 0 16 19"><rect x=".5" y=".5" width="15" height="18" rx="1.2" fill="#fbfbfb" stroke="#6e6e6a" stroke-width="1"/><rect x="1.5" y="1.5" width="3" height="16" fill="#ececea"/>
<path d="M5 4h8M5 6h8M5 8h8M5 11h8M5 13h8M5 15h8" stroke="#a8a8a4" stroke-width=".9"/><circle cx="3" cy="7" r=".7" fill="#555"/><circle cx="3" cy="12" r=".7" fill="#555"/></svg>
<div class="a" style="left:327px;top:502px;width:17px;height:28px;background:#efefef"></div>
<div class="a" style="left:1245px;top:502px;width:27px;height:28px;background:#dcdcdc"></div>
<svg style="left:333px;top:507px" width="16" height="19" viewBox="0 0 16 19"><rect x=".5" y=".5" width="15" height="18" rx="1.2" fill="#fbfbfb" stroke="#6e6e6a" stroke-width="1"/><rect x="1.5" y="1.5" width="3" height="16" fill="#ececea"/>
<path d="M5 4h8M5 6h8M5 8h8M5 11h8M5 13h8M5 15h8" stroke="#a8a8a4" stroke-width=".9"/><circle cx="3" cy="7" r=".7" fill="#555"/><circle cx="3" cy="12" r=".7" fill="#555"/></svg>
<div class="a" style="left:327px;top:530px;width:17px;height:28px;background:#ffffff"></div>
<div class="a" style="left:1245px;top:530px;width:27px;height:28px;background:#eeeeee"></div>
<svg style="left:333px;top:535px" width="16" height="19" viewBox="0 0 16 19"><rect x=".5" y=".5" width="15" height="18" rx="1.2" fill="#fbfbfb" stroke="#6e6e6a" stroke-width="1"/><rect x="1.5" y="1.5" width="3" height="16" fill="#ececea"/>
<path d="M5 4h8M5 6h8M5 8h8M5 11h8M5 13h8M5 15h8" stroke="#a8a8a4" stroke-width=".9"/><circle cx="3" cy="7" r=".7" fill="#555"/><circle cx="3" cy="12" r=".7" fill="#555"/></svg>
<div class="a" style="left:327px;top:558px;width:17px;height:28px;background:#efefef"></div>
<div class="a" style="left:1245px;top:558px;width:27px;height:28px;background:#dcdcdc"></div>
<svg style="left:333px;top:563px" width="16" height="19" viewBox="0 0 16 19"><rect x=".5" y=".5" width="15" height="18" rx="1.2" fill="#fbfbfb" stroke="#6e6e6a" stroke-width="1"/><rect x="1.5" y="1.5" width="3" height="16" fill="#ececea"/>
<path d="M5 4h8M5 6h8M5 8h8M5 11h8M5 13h8M5 15h8" stroke="#a8a8a4" stroke-width=".9"/><circle cx="3" cy="7" r=".7" fill="#555"/><circle cx="3" cy="12" r=".7" fill="#555"/></svg>
<div class="a" style="left:327px;top:586px;width:17px;height:28px;background:#ffffff"></div>
<div class="a" style="left:1245px;top:586px;width:27px;height:28px;background:#eeeeee"></div>
<svg style="left:333px;top:591px" width="16" height="19" viewBox="0 0 16 19"><rect x=".5" y=".5" width="15" height="18" rx="1.2" fill="#fbfbfb" stroke="#6e6e6a" stroke-width="1"/><rect x="1.5" y="1.5" width="3" height="16" fill="#ececea"/>
<path d="M5 4h8M5 6h8M5 8h8M5 11h8M5 13h8M5 15h8" stroke="#a8a8a4" stroke-width=".9"/><circle cx="3" cy="7" r=".7" fill="#555"/><circle cx="3" cy="12" r=".7" fill="#555"/></svg>
<div class="a" style="left:327px;top:614px;width:17px;height:28px;background:#efefef"></div>
<div class="a" style="left:1245px;top:614px;width:27px;height:28px;background:#dcdcdc"></div>
<svg style="left:333px;top:619px" width="16" height="19" viewBox="0 0 16 19"><rect x=".5" y=".5" width="15" height="18" rx="1.2" fill="#fbfbfb" stroke="#6e6e6a" stroke-width="1"/><rect x="1.5" y="1.5" width="3" height="16" fill="#ececea"/>
<path d="M5 4h8M5 6h8M5 8h8M5 11h8M5 13h8M5 15h8" stroke="#a8a8a4" stroke-width=".9"/><circle cx="3" cy="7" r=".7" fill="#555"/><circle cx="3" cy="12" r=".7" fill="#555"/></svg>
<div class="a" style="left:327px;top:642px;width:17px;height:28px;background:#ffffff"></div>
<div class="a" style="left:1245px;top:642px;width:27px;height:28px;background:#eeeeee"></div>
<svg style="left:331px;top:647px" width="16" height="18" viewBox="0 0 16 18"><path d="M1 9 l10-8 v16z" fill="#a8b8e0" stroke="#5a6fa8"/></svg>
<div class="a" style="left:327px;top:670px;width:17px;height:28px;background:#efefef"></div>
<div class="a" style="left:1245px;top:670px;width:27px;height:28px;background:#dcdcdc"></div>
<svg style="left:333px;top:675px" width="16" height="19" viewBox="0 0 16 19"><rect x=".5" y=".5" width="15" height="18" rx="1.2" fill="#fbfbfb" stroke="#6e6e6a" stroke-width="1"/><rect x="1.5" y="1.5" width="3" height="16" fill="#ececea"/>
<path d="M5 4h8M5 6h8M5 8h8M5 11h8M5 13h8M5 15h8" stroke="#a8a8a4" stroke-width=".9"/><circle cx="3" cy="7" r=".7" fill="#555"/><circle cx="3" cy="12" r=".7" fill="#555"/></svg>
<div class="a" style="left:327px;top:698px;width:17px;height:28px;background:#ffffff"></div>
<div class="a" style="left:1245px;top:698px;width:27px;height:28px;background:#eeeeee"></div>
<svg style="left:333px;top:703px" width="16" height="19" viewBox="0 0 16 19"><rect x=".5" y=".5" width="15" height="18" rx="1.2" fill="#fbfbfb" stroke="#6e6e6a" stroke-width="1"/><rect x="1.5" y="1.5" width="3" height="16" fill="#ececea"/>
<path d="M5 4h8M5 6h8M5 8h8M5 11h8M5 13h8M5 15h8" stroke="#a8a8a4" stroke-width=".9"/><circle cx="3" cy="7" r=".7" fill="#555"/><circle cx="3" cy="12" r=".7" fill="#555"/></svg>
<div class="a" style="left:327px;top:726px;width:946px;height:272px;background:#fff"></div>
<div class="a" style="left:0px;top:1005px;width:1263px;height:19px;background:#edeceb;border:1px solid #aeaca5;border-bottom-color:#c4c2bc"></div>
<div class="t" style="left:2px;top:1007px;font-size:13px;transform:scaleX(1.1440);">«lincurve.c» (6,7 КБ) исходный код C</div>
<svg style="left:1264px;top:1008px" width="16" height="16" viewBox="0 0 16 16"><path d="M15 1 L1 15 M15 6 L6 15 M15 11 L11 15" stroke="#a9a7a0" stroke-width="1.2"/></svg>
<div class="a" style="left:343px;top:65px;width:902px;height:842px;background:#edeceb;border:1px solid #2c3642;border-radius:6px 6px 0 0"></div>
<div class="a" style="left:344px;top:66px;width:900px;height:21px;background:linear-gradient(#666e79,#2c3747 40%,#1c2737 62%,#1a2535 92%,#0f1828);border-radius:5px 5px 0 0"></div>
<svg style="left:348px;top:68px" width="16" height="16" viewBox="0 0 16 16"><path d="M2.6 .8 q1.8 1.4 .4 3 q-1.2 1.4 .2 3.6" stroke="#fff" stroke-width="1.8" fill="none" stroke-linecap="round"/>
<path d="M12 5.2 h2.2 q1.6 0 1.6 1.6 v3.6 q0 1.8-1.8 1.8 h-2.2" stroke="#d8b40c" stroke-width="1.3" fill="none"/>
<path d="M2.2 9.2 q0-4.8 5-5 q5 .2 5 5 q0 3.6-5 4 q-5-.4-5-4z" fill="#f0d418" stroke="#c8a20a" stroke-width=".6"/>
<ellipse cx="7" cy="4.6" rx="1.5" ry="1" fill="#faf0a0"/><ellipse cx="5" cy="7" rx="1.8" ry="1.3" fill="#faf0a0" opacity=".7"/>
<ellipse cx="7.3" cy="14.2" rx="5.2" ry="1.8" fill="#f0cc18" stroke="#c8a20a" stroke-width=".5"/>
<ellipse cx="4.6" cy="9.6" rx=".9" ry="1.4" fill="#e03828"/><ellipse cx="10" cy="9.6" rx=".9" ry="1.4" fill="#e03828"/><path d="M7.2 9 l1.1 1.8 l-1.1 1.8 l-1.1-1.8z" fill="#e84050"/></svg>
<div class="t" style="left:665px;top:71px;font-size:12px;font-weight:bold;color:#ffffff;transform:scaleX(1.2056);">1516.c - /home/valera - Geany</div>
<svg style="left:1170px;top:71px" width="68" height="13" viewBox="0 0 68 13"><path d="M6 11 v-8 M2 6.5 l4-4 l4 4" stroke="#fff" stroke-width="2.2" fill="none"/>
<rect x="21" y="8" width="7" height="3" fill="#fff"/>
<rect x="38.5" y="2.5" width="7.5" height="8" fill="none" stroke="#fff" stroke-width="2"/>
<path d="M55.5 1.5 l9 9.5 M64.5 1.5 l-9 9.5" stroke="#fff" stroke-width="2.4"/></svg>
<div class="a" style="left:344px;top:87px;width:900px;height:22px;background:linear-gradient(#f3f2f0,#dedcd7)"></div>
<div class="a" style="left:344px;top:109px;width:900px;height:1px;background:#c0beb8"></div>
<div class="t" style="left:351px;top:91px;font-size:13px;transform:scaleX(1.1237);">Файл</div>
<div class="a" style="left:351px;top:104px;width:11px;height:1px;background:#1a1a1a"></div>
<div class="t" style="left:398px;top:91px;font-size:13px;transform:scaleX(1.1266);">Правка</div>
<div class="a" style="left:398px;top:104px;width:10px;height:1px;background:#1a1a1a"></div>
<div class="t" style="left:460px;top:91px;font-size:13px;transform:scaleX(1.1431);">Поиск</div>
<div class="a" style="left:470px;top:104px;width:8px;height:1px;background:#1a1a1a"></div>
<div class="t" style="left:513px;top:91px;font-size:13px;transform:scaleX(1.1209);">Вид</div>
<div class="a" style="left:513px;top:104px;width:9px;height:1px;background:#1a1a1a"></div>
<div class="t" style="left:551px;top:91px;font-size:13px;transform:scaleX(1.1715);">Документ</div>
<div class="a" style="left:551px;top:104px;width:10px;height:1px;background:#1a1a1a"></div>
<div class="t" style="left:632px;top:91px;font-size:13px;transform:scaleX(1.1540);">Проект</div>
<div class="a" style="left:658px;top:104px;width:8px;height:1px;background:#1a1a1a"></div>
<div class="t" style="left:694px;top:91px;font-size:13px;transform:scaleX(1.1035);">Сборка</div>
<div class="a" style="left:694px;top:104px;width:9px;height:1px;background:#1a1a1a"></div>
<div class="t" style="left:755px;top:91px;font-size:13px;transform:scaleX(1.1476);">Инструменты</div>
<div class="a" style="left:755px;top:104px;width:10px;height:1px;background:#1a1a1a"></div>
<div class="t" style="left:862px;top:91px;font-size:13px;transform:scaleX(1.1228);">Справка</div>
<div class="a" style="left:888px;top:104px;width:8px;height:1px;background:#1a1a1a"></div>
<div class="a" style="left:344px;top:110px;width:900px;height:35px;background:#edeceb"></div>
<div class="a" style="left:344px;top:145px;width:900px;height:1px;background:#c3c1bb"></div>
<div class="a" style="left:344px;top:146px;width:900px;height:1px;background:#f9f9f8"></div>
<svg style="left:353px;top:118px" width="19" height="20" viewBox="0 0 19 20"><path d="M.5 .5 h17 v19 h-17z" fill="url(#gnew)" stroke="#8a8a85"/><circle cx="16" cy="3" r="2.2" fill="#fff8a0" stroke="#e8d040" stroke-width=".8"/><circle cx="3" cy="8" r=".6" fill="#999"/><circle cx="3" cy="12" r=".6" fill="#999"/></svg>
<svg width="0" height="0" style="position:absolute"><defs><linearGradient id="gnew" x1="0" y1="0" x2="1" y2="1"><stop offset="0" stop-color="#f4f4f4"/><stop offset="1" stop-color="#d8d8d8"/></linearGradient></defs></svg>
<svg style="left:384px;top:125px" width="9" height="5" viewBox="0 0 9 5"><path d="M0 0 h9 l-4.5 5z" fill="#111"/></svg>
<svg style="left:407px;top:116px" width="21" height="22" viewBox="0 0 21 22"><path d="M.8 3 h6 v16 h-6z" fill="#a8a8a8" stroke="#555" stroke-width=".8"/><path d="M7.5 .5 h6 l3.5 3.5 v10 h-9.5z" fill="#fafafa" stroke="#555" stroke-width="1"/><path d="M9 3.5h4M9 5.5h5" stroke="#888" stroke-width=".8"/><path d="M3 7.5 h16.5 l-.8 12.5 h-16.2z" fill="url(#gopen)" stroke="#3a6cb8" stroke-width="1"/></svg>
<svg width="0" height="0" style="position:absolute"><defs><linearGradient id="gopen" x1="0" y1="0" x2="0" y2="1"><stop offset="0" stop-color="#a8c8f0"/><stop offset="1" stop-color="#5a8ad0"/></linearGradient></defs></svg>
<svg style="left:438px;top:125px" width="9" height="5" viewBox="0 0 9 5"><path d="M0 0 h9 l-4.5 5z" fill="#111"/></svg>
<svg width="0" height="0" style="position:absolute"><defs><pattern id="dg" width="2" height="2" patternUnits="userSpaceOnUse"><rect width="2" height="2" fill="#f2f2f0"/><rect width="1" height="1" fill="#70706c"/><rect x="1" y="1" width="1" height="1" fill="#70706c"/></pattern><pattern id="db" width="2" height="2" patternUnits="userSpaceOnUse"><rect width="2" height="2" fill="#eef2f6"/><rect width="1" height="1" fill="#3a6494"/><rect x="1" y="1" width="1" height="1" fill="#3a6494"/></pattern><pattern id="dk" width="2" height="2" patternUnits="userSpaceOnUse"><rect width="1" height="1" fill="#000"/><rect x="1" y="1" width="1" height="1" fill="#000"/></pattern><pattern id="dgr" width="2" height="2" patternUnits="userSpaceOnUse"><rect width="2" height="2" fill="#eef2ea"/><rect width="1" height="1" fill="#2f5a1c"/><rect x="1" y="1" width="1" height="1" fill="#2f5a1c"/></pattern></defs></svg>
<svg style="left:461px;top:116px" width="23" height="23" viewBox="0 0 23 23"><path d="M3 6 H19 Q21 6 21.5 8 L22 23 H0 L.5 8 Q1 6 3 6 Z" fill="url(#dg)" shape-rendering="crispEdges"/><path d="M1 6 Q3 1 8 1 Q11 1 12 4 L16 8.5 L11.5 15.5 L7 8.5 L10 6 Q9 4.5 6.5 4.5 Q3 4.5 1 6 Z" fill="url(#db)" shape-rendering="crispEdges"/></svg>
<svg style="left:492px;top:115px" width="25" height="25" viewBox="0 0 25 25"><path d="M3 10 H21 Q23 10 23.5 12 L24 24 H0 L.5 12 Q1 10 3 10 Z" fill="url(#dg)" shape-rendering="crispEdges"/><path d="M0 6 Q4 1 10 1 H14 Q18 1 20 4 L23 8 L13 16 L5 8 L10 5.5 Q8 4.5 6 4.5 Q3 4.5 0 6 Z" fill="url(#db)" shape-rendering="crispEdges"/></svg>
<div class="a" style="left:524px;top:119px;width:1px;height:21px;background:#b9b7b0"></div>
<svg style="left:536px;top:117px" width="21" height="22" viewBox="0 0 21 22"><path d="M.5 .5 h13 l6 6 v15 h-19z" fill="#f6f6f6" stroke="#888"/><path d="M4 15 h8 q4 0 4-4 v-2" stroke="#caa80c" stroke-width="2.6" fill="none"/><path d="M6 12 l-3 3 l3 3" stroke="#caa80c" stroke-width="2.4" fill="none"/><path d="M4 15 h8 q4 0 4-4 v-2" stroke="#f7e06a" stroke-width="1.2" fill="none"/></svg>
<svg style="left:570px;top:120px" width="17" height="17" viewBox="0 0 17 17"><path d="M2.5 2.5 l12 12 M14.5 2.5 l-12 12" stroke="#6e6e6e" stroke-width="4.2" stroke-linecap="round"/><path d="M2.5 2.5 l12 12 M14.5 2.5 l-12 12" stroke="#a0a0a0" stroke-width="2.4" stroke-linecap="round"/></svg>
<div class="a" style="left:598px;top:119px;width:1px;height:21px;background:#b9b7b0"></div>
<svg style="left:610px;top:118px" width="19" height="19" viewBox="0 0 19 19"><path d="M1 9 l8-8 v4.5 h9 v7 h-9 v4.5z" fill="#5cb82c" stroke="#2f7a10" stroke-width="1"/><path d="M3 9 l5-5 v3 h8" stroke="#a8e070" fill="none" stroke-width="1"/></svg>
<svg style="left:643px;top:118px" width="19" height="19" viewBox="0 0 19 19"><path d="M18 9 L10 1 V5 H1 V13 H10 V17 Z" fill="url(#dgr)" shape-rendering="crispEdges"/></svg>
<div class="a" style="left:672px;top:119px;width:1px;height:21px;background:#b9b7b0"></div>
<svg style="left:680px;top:112px" width="30" height="30" viewBox="0 0 30 30"><defs><linearGradient id="gcomp" x1="0" x2="1"><stop offset="0" stop-color="#c8dcf4"/><stop offset=".45" stop-color="#6a98d8"/><stop offset=".5" stop-color="#2a5aa8"/><stop offset="1" stop-color="#3a6ab8"/></linearGradient></defs><path d="M3.5 15.5 L7.8 8.2 L14.8 15.5 L8 19.5 Z" fill="url(#gcomp)" stroke="#1a3a78" stroke-width="1"/><path d="M10.5 9 Q12.5 5.2 16.5 5.3 Q19.8 5.6 19.6 10.5" stroke="#c8a810" stroke-width="3" fill="none"/><path d="M10.5 9 Q12.5 5.2 16.5 5.3 Q19.8 5.6 19.6 10.5" stroke="#f8e040" stroke-width="1.4" fill="none"/><path d="M14.2 10.5 L24.6 10.5 L19.5 15.8 Z" fill="#f4dc30" stroke="#b89a10" stroke-width=".8"/><circle cx="19.5" cy="22.5" r="5.2" fill="#e81010" stroke="#a00000" stroke-width="1"/><circle cx="19.5" cy="22.5" r="3.5" fill="#f42020"/></svg>
<svg style="left:713px;top:115px" width="26" height="26" viewBox="0 0 26 26"><path d="M1.2 3.6 L11.5 1.5 L25 11.5 L14.3 17 Z" fill="#e86018"/><path d="M1.2 3.6 L14.3 17 V24.7 L1.2 11 Z" fill="#7a2a08"/><path d="M14.3 17 L25 11.5 V19 L14.3 24.7 Z" fill="#b04010"/><g fill="#1a0600"><ellipse cx="8.5" cy="5.2" rx="3.4" ry="1.9" transform="rotate(20 8.5 5.2)"/><ellipse cx="13" cy="8.7" rx="3.4" ry="1.9" transform="rotate(20 13 8.7)"/><ellipse cx="17.5" cy="12.2" rx="3.4" ry="1.9" transform="rotate(20 17.5 12.2)"/></g><path d="M1.2 3.6 L14.3 17 V24.7 L1.2 11 Z" fill="url(#dk)" opacity=".6"/><path d="M1.2 3.6 L14.3 17 L25 11.5 M14.3 17 V24.7" stroke="#1a0600" stroke-width="1" fill="none"/><path d="M1.2 3.6 L11.5 1.5 L25 11.5 V19 L14.3 24.7 L1.2 11 Z" fill="none" stroke="#000" stroke-width="1"/></svg>
<svg style="left:748px;top:125px" width="9" height="5" viewBox="0 0 9 5"><path d="M0 0 h9 l-4.5 5z" fill="#111"/></svg>
<svg style="left:764px;top:112px" width="30" height="30" viewBox="0 0 30 30"><ellipse cx="16" cy="26" rx="9" ry="2" fill="#000" opacity=".1"/><path d="M27.70 16.60 L27.59 17.85 L25.57 18.45 L25.18 19.30 L26.02 21.23 L25.13 22.12 L23.20 21.28 L22.35 21.67 L21.75 23.69 L20.50 23.80 L19.56 21.92 L18.65 21.67 L16.90 22.84 L15.87 22.12 L16.36 20.07 L15.82 19.30 L13.73 19.06 L13.41 17.85 L15.10 16.60 L15.18 15.66 L13.73 14.14 L14.26 13.00 L16.36 13.13 L17.03 12.46 L16.90 10.36 L18.04 9.83 L19.56 11.28 L20.50 11.20 L21.75 9.51 L22.96 9.83 L23.20 11.92 L23.97 12.46 L26.02 11.97 L26.74 13.00 L25.57 14.75 L25.82 15.66 Z" fill="#c8c8c6" stroke="#333" stroke-width="1.1"/><circle cx="20.5" cy="16.6" r="3" fill="#e8e8e6" stroke="#888" stroke-width=".8"/><circle cx="20.5" cy="16.6" r="1" fill="#555"/><path d="M18.00 9.20 L17.91 10.10 L16.54 10.50 L16.23 11.09 L16.65 12.45 L15.96 13.02 L14.70 12.34 L14.06 12.53 L13.40 13.80 L12.50 13.71 L12.10 12.34 L11.51 12.03 L10.15 12.45 L9.58 11.76 L10.26 10.50 L10.07 9.86 L8.80 9.20 L8.89 8.30 L10.26 7.90 L10.57 7.31 L10.15 5.95 L10.84 5.38 L12.10 6.06 L12.74 5.87 L13.40 4.60 L14.30 4.69 L14.70 6.06 L15.29 6.37 L16.65 5.95 L17.22 6.64 L16.54 7.90 L16.73 8.54 Z" fill="#fafafa" stroke="#333" stroke-width="1.1"/><circle cx="13.4" cy="9.2" r="1.2" fill="none" stroke="#333" stroke-width=".8"/><path d="M15.90 20.50 L15.81 21.40 L14.44 21.80 L14.13 22.39 L14.55 23.75 L13.86 24.32 L12.60 23.64 L11.96 23.83 L11.30 25.10 L10.40 25.01 L10.00 23.64 L9.41 23.33 L8.05 23.75 L7.48 23.06 L8.16 21.80 L7.97 21.16 L6.70 20.50 L6.79 19.60 L8.16 19.20 L8.47 18.61 L8.05 17.25 L8.74 16.68 L10.00 17.36 L10.64 17.17 L11.30 15.90 L12.20 15.99 L12.60 17.36 L13.19 17.67 L14.55 17.25 L15.12 17.94 L14.44 19.20 L14.63 19.84 Z" fill="#fafafa" stroke="#333" stroke-width="1.1"/><circle cx="11.3" cy="20.5" r="1.2" fill="none" stroke="#333" stroke-width=".8"/></svg>
<div class="a" style="left:801px;top:119px;width:1px;height:21px;background:#b9b7b0"></div>
<svg style="left:812px;top:117px" width="22" height="22" viewBox="0 0 22 22"><rect x=".5" y=".5" width="21" height="21" rx="2" fill="#ddd" stroke="#666" stroke-width="1"/><rect x="1" y="1" width="7" height="7" fill="#e03434"/><rect x="8" y="1" width="6" height="7" fill="#8cb4e8"/><rect x="14" y="1" width="7" height="7" fill="#f4dc40"/><rect x="1" y="8" width="7" height="6" fill="#c8a0c8"/><rect x="8" y="8" width="6" height="6" fill="#b8c0d0"/><rect x="14" y="8" width="7" height="6" fill="#f8a040"/><rect x="1" y="14" width="7" height="7" fill="#e0e0dc"/><rect x="8" y="14" width="6" height="7" fill="#7ae040"/><rect x="14" y="14" width="7" height="7" fill="#8cb4e8"/><path d="M1 1 H21 V21 H1Z" fill="none" stroke="#555" stroke-width=".6"/><path d="M10 3.5 Q11.2 3 12 3.8 V9 L13 8.5 L14.2 9 L15.2 8.8 L16.5 9.5 V14 Q16.5 17 14 17.5 H11 Q8.5 17 8 14.5 L7 11.5 Q7.5 10.5 8.7 11.2 L10 12.5 Z" fill="#f8d8a8" stroke="#b87020" stroke-width=".9"/><rect x="9.5" y="17.5" width="7" height="2.5" fill="#fff" stroke="#2a58a0" stroke-width=".8"/></svg>
<div class="a" style="left:843px;top:119px;width:1px;height:21px;background:#b9b7b0"></div>
<div class="a" style="left:849px;top:115px;width:160px;height:25px;background:#fff;border:1px solid #a9a6a0;border-radius:2px"></div>
<svg style="left:988px;top:119px" width="18" height="18" viewBox="0 0 18 18"><path d="M2.5 1.5 L6.5 5.5" stroke="#8a4a10" stroke-width="3.2" stroke-linecap="round"/><path d="M5 6.5 L8 4.5 Q13 9 17 10.5 L12.5 16.5 Q11 12.5 5 6.5 Z" fill="#f0d828" stroke="#a08010" stroke-width=".9"/><path d="M5 6.5 L8 4.5" stroke="#d02020" stroke-width="1.8"/><path d="M9 7.5 L14 12.5" stroke="#fff080" stroke-width=".8"/></svg>
<svg style="left:1016px;top:118px" width="21" height="22" viewBox="0 0 21 22"><path d="M.5 .5 h13 v16 h-13z" fill="#f4f4f4" stroke="#888"/><path d="M3 4h8M3 6.5h8M3 9h5" stroke="#aaa"/><circle cx="12" cy="13" r="5" fill="#9ec4f0" stroke="#555" stroke-width="1.3"/><path d="M15.5 16.5 l4 4" stroke="#444" stroke-width="2.4"/></svg>
<div class="a" style="left:1045px;top:119px;width:1px;height:21px;background:#b9b7b0"></div>
<div class="a" style="left:1051px;top:115px;width:82px;height:25px;background:#fff;border:1px solid #a9a6a0;border-radius:2px"></div>
<svg style="left:1112px;top:119px" width="18" height="18" viewBox="0 0 18 18"><path d="M2.5 1.5 L6.5 5.5" stroke="#8a4a10" stroke-width="3.2" stroke-linecap="round"/><path d="M5 6.5 L8 4.5 Q13 9 17 10.5 L12.5 16.5 Q11 12.5 5 6.5 Z" fill="#f0d828" stroke="#a08010" stroke-width=".9"/><path d="M5 6.5 L8 4.5" stroke="#d02020" stroke-width="1.8"/><path d="M9 7.5 L14 12.5" stroke="#fff080" stroke-width=".8"/></svg>
<svg style="left:1136px;top:114px" width="28" height="28" viewBox="0 0 28 28"><ellipse cx="15" cy="24" rx="7" ry="2.5" fill="#000" opacity=".12"/><path d="M2.5 11.5 Q6 3 14 4 Q19 5 20.5 11 H24.5 L16.5 20.5 L8.5 11 H13 Q12 8.5 9.5 8.5 Q6 8.5 2.5 11.5 Z" fill="#5cb82c" stroke="#2f7a10" stroke-width="1"/><path d="M4.5 9.5 Q8 5 13.5 5.5" stroke="#b0e890" stroke-width="1" fill="none"/></svg>
<div class="a" style="left:1169px;top:119px;width:1px;height:21px;background:#b9b7b0"></div>
<svg style="left:1174px;top:113px" width="30" height="28" viewBox="0 0 30 28"><rect x="5.7" y="4.6" width="14" height="20" rx="1.6" fill="#f6f6f4" stroke="#55554f" stroke-width="1.1"/>
<path d="M6.3 5.2 H14.8 V19 L6.3 23.6 Z" fill="url(#gd)"/>
<path d="M11 11 l2.5 2.5 M12 14.5 l-1.6 1.6" stroke="#d4d4d4" stroke-width=".8"/>
<path d="M16.1 14.5 L22.3 9.2 V11.4 H25.6 V17.6 H22.3 V19.8 Z" fill="#e41c1c" stroke="#a80000" stroke-width=".9"/>
<path d="M18 14.5 L22 11.5 V13 H25" stroke="#f88" stroke-width=".6" fill="none"/></svg>
<div class="a" style="left:345px;top:147px;width:39px;height:23px;background:#fff"></div>
<div class="a" style="left:384px;top:147px;width:88px;height:23px;background:#e8e7e5;border:1px solid #b9b6af;border-bottom:none;border-radius:2px 2px 0 0"></div>
<div class="t" style="left:349px;top:150px;font-size:13px;transform:scaleX(1.1809);">Теги</div>
<div class="t" style="left:388px;top:150px;font-size:13px;transform:scaleX(1.1904);">Документы</div>
<div class="a" style="left:345px;top:170px;width:155px;height:481px;background:#fff;border:1px solid #aaa8a1;box-shadow:inset -1px 0 0 #c8c6c0, inset 1px 1px 0 #d0cec8"></div>
<svg style="left:348px;top:179px" width="10" height="6" viewBox="0 0 10 6"><path d="M.5 .5 h9 l-4.5 5z" fill="#fff" stroke="#333" stroke-width="1"/></svg>
<svg style="left:369px;top:180px" width="9" height="10" viewBox="0 0 9 10"><path d="M4.5 .5 l4 2.2 v4.6 l-4 2.2 l-4-2.2 v-4.6z" fill="#a89cb8" stroke="#222" stroke-width="1"/><path d="M.5 2.7 l4 2.2 l4-2.2 M4.5 4.9 v4.6" stroke="#e0d8f0" stroke-width=".6" fill="none"/></svg>
<div class="t" style="left:383px;top:175px;font-size:12px;transform:scaleX(1.1153);">Переменные</div>
<svg style="left:384px;top:200px" width="9" height="10" viewBox="0 0 9 10"><path d="M4.5 .5 l4 2.2 v4.6 l-4 2.2 l-4-2.2 v-4.6z" fill="#a89cb8" stroke="#222" stroke-width="1"/><path d="M.5 2.7 l4 2.2 l4-2.2 M4.5 4.9 v4.6" stroke="#e0d8f0" stroke-width=".6" fill="none"/></svg>
<div class="t" style="left:398px;top:195px;font-size:12px;transform:scaleX(1.2218);">in [1]</div>
<div class="a" style="left:346px;top:650px;width:153px;height:16px;background:linear-gradient(#d8d6d1,#f2f1ef);border:1px solid #c3c1ba"></div>
<div class="a" style="left:346px;top:650px;width:14px;height:16px;background:linear-gradient(#fafaf9,#e2e0dc);border:1px solid #b3b0a9"></div>
<svg style="left:350px;top:655px" width="4" height="7" viewBox="0 0 4 7"><path d="M4 0 v7 l-4-3.5z" fill="#999"/></svg>
<div class="a" style="left:360px;top:650px;width:77px;height:16px;background:linear-gradient(#fbfbfa,#dfddd8);border:1px solid #aaa7a0;border-radius:2px"></div>
<div class="a" style="left:392px;top:655px;width:1px;height:7px;background:#9a9893"></div>
<div class="a" style="left:394px;top:655px;width:1px;height:7px;background:#9a9893"></div>
<div class="a" style="left:396px;top:655px;width:1px;height:7px;background:#9a9893"></div>
<div class="a" style="left:398px;top:655px;width:1px;height:7px;background:#9a9893"></div>
<div class="a" style="left:400px;top:655px;width:1px;height:7px;background:#9a9893"></div>
<div class="a" style="left:402px;top:655px;width:1px;height:7px;background:#9a9893"></div>
<div class="a" style="left:404px;top:655px;width:1px;height:7px;background:#9a9893"></div>
<div class="a" style="left:485px;top:650px;width:14px;height:16px;background:linear-gradient(#f0efed,#d6d4cf);border:1px solid #9f9c95"></div>
<svg style="left:490px;top:654px" width="5" height="8" viewBox="0 0 5 8"><path d="M0 0 v8 l5-4z" fill="#111"/></svg>
<div class="a" style="left:500px;top:146px;width:3px;height:520px;background:#edeceb"></div>
<div class="a" style="left:503px;top:147px;width:89px;height:25px;background:#e6e5e2;border:1px solid #b9b6af;border-bottom:none;border-radius:2px 2px 0 0"></div>
<div class="t" style="left:507px;top:152px;font-size:13px;transform:scaleX(1.1200);">12авав.c</div>
<svg style="left:574px;top:155px" width="11" height="11" viewBox="0 0 11 11"><path d="M2 2 L9 9 M9 2 L2 9" stroke="#7a7a78" stroke-width="3" stroke-linecap="round"/><path d="M2 2 L9 9 M9 2 L2 9" stroke="#c4c4c2" stroke-width="1.3" stroke-linecap="round"/></svg>
<div class="a" style="left:591px;top:147px;width:76px;height:25px;background:#e6e5e2;border:1px solid #b9b6af;border-bottom:none;border-radius:2px 2px 0 0"></div>
<div class="t" style="left:594px;top:152px;font-size:13px;transform:scaleX(1.1348);">1.comp</div>
<svg style="left:650px;top:155px" width="11" height="11" viewBox="0 0 11 11"><path d="M2 2 L9 9 M9 2 L2 9" stroke="#7a7a78" stroke-width="3" stroke-linecap="round"/><path d="M2 2 L9 9 M9 2 L2 9" stroke="#c4c4c2" stroke-width="1.3" stroke-linecap="round"/></svg>
<div class="a" style="left:503px;top:172px;width:741px;height:1px;background:#b9b6af"></div>
<div class="a" style="left:666px;top:146px;width:73px;height:27px;background:#fff;border:1px solid #b9b6af;border-bottom:none;border-radius:2px 2px 0 0"></div>
<div class="t" style="left:670px;top:152px;font-size:13px;transform:scaleX(1.1353);">1516.c</div>
<svg style="left:721px;top:154px" width="11" height="11" viewBox="0 0 11 11"><path d="M2 2 L9 9 M9 2 L2 9" stroke="#7a7a78" stroke-width="3" stroke-linecap="round"/><path d="M2 2 L9 9 M9 2 L2 9" stroke="#c4c4c2" stroke-width="1.3" stroke-linecap="round"/></svg>
<div class="a" style="left:503px;top:173px;width:1px;height:478px;background:#b6b4ae"></div>
<div class="a" style="left:504px;top:173px;width:724px;height:478px;background:#fff"></div>
<div class="a" style="left:504px;top:173px;width:40px;height:478px;background:#cccccc"></div>
<div class="a" style="left:544px;top:173px;width:12px;height:478px;background:#dfdfdf"></div>
<div class="a" style="left:556px;top:368px;width:672px;height:15px;background:#f0f0f0"></div>
<div class="a" style="left:1133px;top:173px;width:1px;height:478px;background:#c6ecc6"></div>
<div class="t m" style="left:517px;top:174px;color:#000;">1</div>
<div class="t m" style="left:517px;top:189px;color:#000;">2</div>
<div class="t m" style="left:517px;top:204px;color:#000;">3</div>
<div class="t m" style="left:517px;top:219px;color:#000;">4</div>
<div class="t m" style="left:517px;top:234px;color:#000;">5</div>
<div class="t m" style="left:517px;top:249px;color:#000;">6</div>
<div class="t m" style="left:517px;top:264px;color:#000;">7</div>
<div class="t m" style="left:517px;top:279px;color:#000;">8</div>
<div class="t m" style="left:517px;top:294px;color:#000;">9</div>
<div class="t m" style="left:509px;top:309px;color:#000;">10</div>
<div class="t m" style="left:509px;top:324px;color:#000;">11</div>
<div class="t m" style="left:509px;top:339px;color:#000;">12</div>
<div class="t m" style="left:509px;top:354px;color:#000;">13</div>
<div class="t m" style="left:509px;top:369px;color:#000;">14</div>
<div class="a" style="left:546px;top:191px;width:10px;height:10px;background:#fff;border:1px solid #000"></div>
<div class="a" style="left:548px;top:195px;width:6px;height:1px;background:#000"></div>
<div class="a" style="left:550px;top:201px;width:1px;height:70px;background:#000"></div>
<div class="a" style="left:550px;top:270px;width:5px;height:1px;background:#000"></div>
<div class="a" style="left:546px;top:281px;width:10px;height:10px;background:#fff;border:1px solid #000"></div>
<div class="a" style="left:548px;top:285px;width:6px;height:1px;background:#000"></div>
<div class="a" style="left:550px;top:291px;width:1px;height:84px;background:#000"></div>
<div class="a" style="left:550px;top:374px;width:5px;height:1px;background:#000"></div>
<div class="t m" style="left:557px;top:174px"><span style="color:#00007f;font-weight:bold">for</span><span style="color:#000;"> i in </span><span style="color:#007f00;">11</span><span style="color:#301010;">,</span><span style="color:#007f00;">14</span><span style="color:#301010;">,</span><span style="color:#007f00;">17</span><span style="color:#301010;">:</span></div>
<div class="t m" style="left:557px;top:189px"><span style="color:#00007f;font-weight:bold">if</span><span style="color:#301010;">(</span><span style="color:#000;">in</span><span style="color:#301010;">&gt;</span><span style="color:#000;">i</span><span style="color:#301010;">)</span><span style="color:#000;"> </span><span style="color:#301010;">{</span></div>
<div class="t m" style="left:557px;top:204px"><span style="color:#000;">out</span><span style="color:#301010;">=</span><span style="color:#000;">i</span><span style="color:#301010;">;</span></div>
<div class="t m" style="left:557px;top:219px"><span style="color:#000;">timer0</span><span style="color:#007f00;">.5</span><span style="color:#301010;">;</span></div>
<div class="t m" style="left:557px;top:234px"><span style="color:#000;">out</span><span style="color:#301010;">=</span><span style="color:#000;">in</span><span style="color:#301010;">;</span></div>
<div class="t m" style="left:557px;top:249px"><span style="color:#000;">old_in</span><span style="color:#301010;">=</span><span style="color:#000;">in</span><span style="color:#301010;">;</span></div>
<div class="t m" style="left:557px;top:264px"><span style="color:#301010;">}</span></div>
<div class="t m" style="left:557px;top:279px"><span style="color:#00007f;font-weight:bold">if</span><span style="color:#301010;">(</span><span style="color:#000;">old_in</span><span style="color:#301010;">&lt;</span><span style="color:#000;">i</span><span style="color:#301010;">)</span><span style="color:#301010;">{</span></div>
<div class="t m" style="left:557px;top:294px"><span style="color:#000;">out</span><span style="color:#301010;">=</span><span style="color:#000;">i</span><span style="color:#301010;">;</span></div>
<div class="t m" style="left:557px;top:309px"><span style="color:#000;">timer0</span><span style="color:#007f00;">.5</span><span style="color:#301010;">;</span></div>
<div class="t m" style="left:557px;top:324px"><span style="color:#000;">out</span><span style="color:#301010;">=</span><span style="color:#000;">in</span><span style="color:#301010;">;</span></div>
<div class="t m" style="left:557px;top:339px"><span style="color:#000;">old_in</span><span style="color:#301010;">=</span><span style="color:#000;">in</span><span style="color:#301010;">;</span></div>
<div class="t m" style="left:557px;top:354px"><span style="color:#301010;">}</span></div>
<svg style="left:0px;top:0px" width="1" height="1" viewBox="0 0 1 1"><path d="M557 188 L559 186 L561 188 L563 186 L565 188 L567 186 L569 188 L571 186 L573 188 L575 186 L577 188 L579 186 L581 188 L583 186 L585 188 L587 186 L589 188 L591 186 L593 188 L595 186 L597 188 L599 186 L601 188 L603 186 L605 188 L607 186 L609 188 L611 186 L613 188 L615 186 L617 188 L619 186 L621 188 L623 186 L625 188 L627 186 L629 188 L631 186 L633 188 L635 186 L637 188 L639 186 L641 188 L643 186 L645 188 L647 186 L649 188 L651 186 L653 188 L655 186 L657 188 L659 186 L661 188 L663 186 L665 188 L667 186 L669 188 L671 186 L673 188 L675 186 L677 188 L679 186 L681 188 L683 186 L685 188 L687 186 L689 188 L691 186 L693 188 L695 186 L697 188 L699 186 L701 188" stroke="#ff7a7a" stroke-width="1" fill="none"/></svg>
<svg style="left:0px;top:0px" width="1" height="1" viewBox="0 0 1 1"><path d="M557 292 L559 290 L561 292 L563 290 L565 292 L567 290 L569 292 L571 290 L573 292 L575 290 L577 292 L579 290 L581 292 L583 290 L585 292 L587 290 L589 292 L591 290 L593 292 L595 290 L597 292 L599 290 L601 292 L603 290 L605 292 L607 290 L609 292 L611 290 L613 292 L615 290 L617 292 L619 290 L621 292 L623 290 L625 292 L627 290 L629 292 L631 290 L633 292 L635 290 L637 292 L639 290 L641 292 L643 290 L645 292 L647 290 L649 292 L651 290 L653 292 L655 290 L657 292 L659 290 L661 292" stroke="#ff7a7a" stroke-width="1" fill="none"/></svg>
<div class="a" style="left:1228px;top:173px;width:16px;height:478px;background:linear-gradient(90deg,#d2d0cb,#efeeec);border:1px solid #c3c1ba"></div>
<div class="a" style="left:1228px;top:173px;width:15px;height:15px;background:linear-gradient(#fafaf9,#e4e2de);border:1px solid #b3b0a9"></div>
<svg style="left:1232px;top:178px" width="8" height="5" viewBox="0 0 8 5"><path d="M0 5 h8 l-4-5z" fill="#999"/></svg>
<div class="a" style="left:1228px;top:189px;width:15px;height:447px;background:linear-gradient(90deg,#f6f6f5,#d6d4cf);border:1px solid #a9a6a0;border-radius:2px"></div>
<div class="a" style="left:1232px;top:407px;width:7px;height:1px;background:#9a9893"></div>
<div class="a" style="left:1232px;top:409px;width:7px;height:1px;background:#9a9893"></div>
<div class="a" style="left:1232px;top:411px;width:7px;height:1px;background:#9a9893"></div>
<div class="a" style="left:1232px;top:413px;width:7px;height:1px;background:#9a9893"></div>
<div class="a" style="left:1232px;top:415px;width:7px;height:1px;background:#9a9893"></div>
<div class="a" style="left:1228px;top:636px;width:15px;height:15px;background:linear-gradient(#fafaf9,#e4e2de);border:1px solid #b3b0a9"></div>
<svg style="left:1232px;top:641px" width="8" height="5" viewBox="0 0 8 5"><path d="M0 0 h8 l-4 5z" fill="#999"/></svg>
<div class="a" style="left:504px;top:651px;width:724px;height:16px;background:linear-gradient(#d8d6d1,#f2f1ef);border:1px solid #c3c1ba"></div>
<div class="a" style="left:504px;top:651px;width:14px;height:16px;background:linear-gradient(#fafaf9,#e2e0dc);border:1px solid #b3b0a9"></div>
<svg style="left:508px;top:656px" width="4" height="7" viewBox="0 0 4 7"><path d="M4 0 v7 l-4-3.5z" fill="#999"/></svg>
<div class="a" style="left:519px;top:651px;width:53px;height:16px;background:linear-gradient(#fbfbfa,#dfddd8);border:1px solid #aaa7a0;border-radius:2px"></div>
<div class="a" style="left:539px;top:656px;width:1px;height:7px;background:#9a9893"></div>
<div class="a" style="left:541px;top:656px;width:1px;height:7px;background:#9a9893"></div>
<div class="a" style="left:543px;top:656px;width:1px;height:7px;background:#9a9893"></div>
<div class="a" style="left:545px;top:656px;width:1px;height:7px;background:#9a9893"></div>
<div class="a" style="left:547px;top:656px;width:1px;height:7px;background:#9a9893"></div>
<div class="a" style="left:549px;top:656px;width:1px;height:7px;background:#9a9893"></div>
<div class="a" style="left:551px;top:656px;width:1px;height:7px;background:#9a9893"></div>
<div class="a" style="left:1214px;top:651px;width:14px;height:16px;background:linear-gradient(#f0efed,#d6d4cf);border:1px solid #9f9c95"></div>
<svg style="left:1219px;top:655px" width="5" height="8" viewBox="0 0 5 8"><path d="M0 0 v8 l5-4z" fill="#111"/></svg>
<div class="a" style="left:1228px;top:651px;width:16px;height:15px;background:#edeceb"></div>
<div class="a" style="left:346px;top:671px;width:896px;height:211px;background:#edeceb;border:1px solid #b3b0a9"></div>
<div class="a" style="left:348px;top:673px;width:892px;height:207px;background:#edeceb;border:1px solid #b3b0a9;border-right-color:#d8d6d0;border-bottom-color:#d8d6d0"></div>
<div class="a" style="left:441px;top:674px;width:798px;height:205px;background:#fff;border-left:1px solid #b3b0a9"></div>
<div class="a" style="left:349px;top:675px;width:93px;height:23px;background:#e6e5e2;border:1px solid #b9b6af;border-right:none"></div>
<div class="t" style="left:372px;top:679px;font-size:13px;transform:scaleX(1.1441);">Статус</div>
<div class="a" style="left:349px;top:697px;width:93px;height:23px;background:#fff"></div>
<div class="t" style="left:352px;top:702px;font-size:13px;transform:scaleX(1.1495);">Компилятор</div>
<div class="a" style="left:349px;top:720px;width:93px;height:23px;background:#e6e5e2;border:1px solid #b9b6af;border-right:none"></div>
<div class="t" style="left:356px;top:725px;font-size:13px;transform:scaleX(1.1054);">Сообщения</div>
<div class="a" style="left:349px;top:744px;width:93px;height:23px;background:#e6e5e2;border:1px solid #b9b6af;border-right:none"></div>
<div class="t" style="left:367px;top:748px;font-size:13px;transform:scaleX(1.1662);">Заметки</div>
<div class="a" style="left:349px;top:767px;width:93px;height:23px;background:#e6e5e2;border:1px solid #b9b6af;border-right:none"></div>
<div class="t" style="left:362px;top:771px;font-size:13px;transform:scaleX(1.1232);">Терминал</div>
<div class="t" style="left:444px;top:679px;font-size:12px;color:#0a0ad8;transform:scaleX(1.1680);">gcc -Wall -o &quot;1516&quot; &quot;1516.c&quot; (в каталоге: /home/valera)</div>
<div class="t" style="left:444px;top:698px;font-size:12px;color:#0a0ad8;transform:scaleX(1.1279);">Сборка завершилась с ошибкой.</div>
<div class="t" style="left:444px;top:718px;font-size:12px;color:#ff1414;transform:scaleX(1.1852);">1516.c:1:1: error: expected identifier or ‘(’ before ‘for’</div>
<div class="t" style="left:444px;top:738px;font-size:12px;color:#ff1414;transform:scaleX(1.1900);">1516.c:8:1: error: expected identifier or ‘(’ before ‘if’</div>
<div class="a" style="left:344px;top:883px;width:900px;height:1px;background:#a9a6a0"></div>
<div class="a" style="left:345px;top:884px;width:881px;height:19px;background:#edeceb;border:1px solid #c8c6c0"></div>
<div class="t" style="left:346px;top:886px;font-size:13px;transform:scaleX(1.1548);">line: 14 / 14</div>
<div class="t" style="left:446px;top:886px;font-size:13px;transform:scaleX(1.1413);">col: 0</div>
<div class="t" style="left:510px;top:886px;font-size:13px;transform:scaleX(1.1307);">sel: 0</div>
<div class="t" style="left:575px;top:886px;font-size:13px;transform:scaleX(1.0323);">ВСТ</div>
<div class="t" style="left:624px;top:886px;font-size:13px;transform:scaleX(1.0424);">ТАБ</div>
<div class="t" style="left:675px;top:886px;font-size:13px;transform:scaleX(1.1096);">mode: Unix (LF)</div>
<div class="t" style="left:801px;top:886px;font-size:13px;transform:scaleX(1.0952);">encoding: UTF-8</div>
<div class="t" style="left:930px;top:886px;font-size:13px;transform:scaleX(1.1486);">filetype: C</div>
<div class="t" style="left:1020px;top:886px;font-size:13px;transform:scaleX(1.1349);">scope: неизвестно</div>
<svg style="left:1228px;top:887px" width="15" height="15" viewBox="0 0 15 15"><path d="M14 1 L1 14 M14 5.5 L5.5 14 M14 10 L10 14" stroke="#a9a7a0" stroke-width="1.3"/></svg>
<svg style="left:886px;top:631px" width="14" height="20" viewBox="0 0 14 20"><path d="M3 3.5 H5.5 L6.5 4.8 L7.5 3.5 H10 M6.5 4.8 V15.2 M3 16.5 H5.5 L6.5 15.2 L7.5 16.5 H10" stroke="#000" stroke-width="1.3" fill="none"/></svg>
</body></html>
